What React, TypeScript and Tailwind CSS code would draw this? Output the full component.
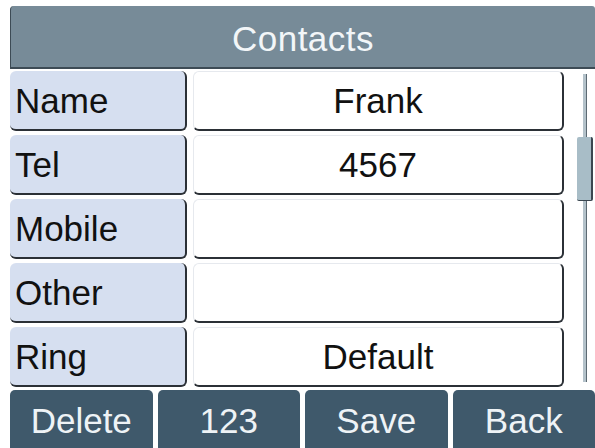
import React from 'react';

// Phone contact edit screen: title bar, field rows, scrollbar and softkeys
const FIELDS: { label: string; value: string }[] = [
  { label: 'Name', value: 'Frank' },
  { label: 'Tel', value: '4567' },
  { label: 'Mobile', value: '' },
  { label: 'Other', value: '' },
  { label: 'Ring', value: 'Default' },
];

const SOFTKEYS = ['Delete', '123', 'Save', 'Back'];

export default function App() {
  return (
    <div
      className="w-[595px] h-[448px] bg-white overflow-hidden flex flex-col"
      style={{ fontFamily: '"Liberation Sans", Arial, sans-serif' }}
    >
      {/* Title bar */}
      <div className="ml-[10px] mt-[6px] h-[63px] shrink-0 bg-[#778b98] rounded-tl-[4px] rounded-tr-[3px] border-b-2 border-l border-[#3d4b55] flex items-center justify-center pt-[4px]">
        <span className="text-[35px] tracking-[0.5px] text-[#f2f6f8] leading-none">Contacts</span>
      </div>

      {/* Field rows + scrollbar */}
      <div className="flex pl-[10px] pt-[2px]">
        <div className="flex flex-col gap-[4px] w-[554px]">
          {FIELDS.map((f) => (
            <div key={f.label} className="flex gap-[6px] h-[60px]">
              <div className="w-[177px] bg-[#d6dff0] rounded-[6px] border-r-2 border-b-2 border-[#2b3036] flex items-center pl-[5px]">
                <span className="text-[35px] text-[#111] leading-none">{f.label}</span>
              </div>
              <div className="flex-1 bg-white rounded-[6px] border-r-2 border-b-2 border-l border-t border-l-[#e6e9ee] border-t-[#e6e9ee] border-r-[#2b3036] border-b-[#2b3036] flex items-center justify-center">
                <span className="text-[35px] text-[#111] leading-none">{f.value}</span>
              </div>
            </div>
          ))}
        </div>

        {/* Scrollbar */}
        <div className="relative w-[31px] h-[316px]">
          <div className="absolute left-[19px] top-[3px] w-[4px] h-[308px] bg-[#b4c2ca] border-r border-[#5d6a73]" />
          <div className="absolute left-[13px] top-[66px] w-[16px] h-[64px] bg-[#a8bdc7] border-r-2 border-b border-[#3b4750] rounded-[2px]" />
        </div>
      </div>

      {/* Softkeys */}
      <div className="flex gap-[5px] pl-[10px] mt-[3px] flex-1">
        {SOFTKEYS.map((k) => (
          <div
            key={k}
            className="flex-1 bg-[#3f596b] rounded-t-[5px] flex items-center justify-center pt-[2px]"
          >
            <span className="text-[35px] text-[#eef3f6] leading-none">{k}</span>
          </div>
        ))}
      </div>
    </div>
  );
}
